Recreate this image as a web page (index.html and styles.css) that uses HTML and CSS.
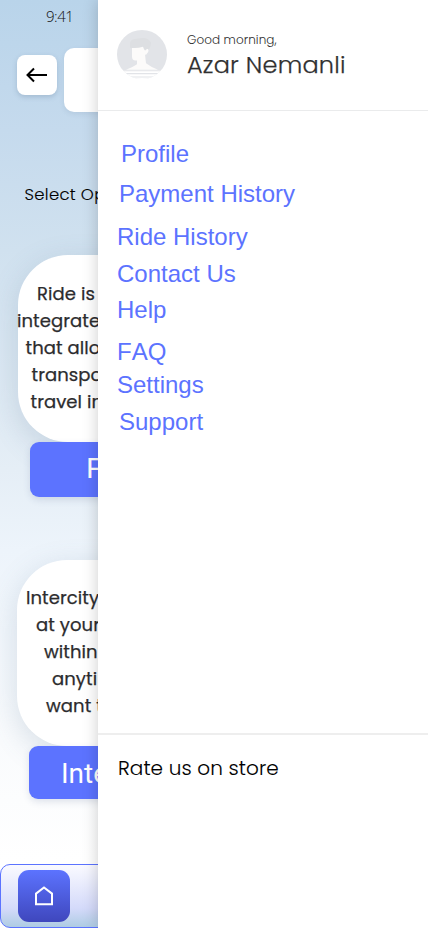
FILE: index.html
```html
<!DOCTYPE html>
<html lang="en">
<head>
<meta charset="utf-8">
<title>Menu</title>
<link rel="stylesheet" href="styles.css">
</head>
<body>
<div class="screen">
  <main class="page">
    <div class="time">9:41</div>
    <div class="topbar">
      <div class="back"><svg width="22" height="16" viewBox="0 0 22 16" fill="none" stroke="#000" stroke-width="2"><path d="M21 8H2M8 1.5L1.5 8L8 14.5"/></svg></div>
      <div class="panel"></div>
    </div>
    <h2 class="heading">Select Op</h2>
    <section class="card">
      <p class="l1">Ride is</p>
      <p class="l2">integrate</p>
      <p class="l3">that allo</p>
      <p class="l4">transpo</p>
      <p class="l5">travel in</p>
    </section>
    <div class="button ride">F</div>
    <section class="card second">
      <p class="m1">Intercity</p>
      <p class="m2">at your</p>
      <p class="m3">within</p>
      <p class="m4">anyti</p>
      <p class="m5">want t</p>
    </section>
    <div class="button inter">Inte</div>
    <nav class="tabs">
      <div class="home"><svg width="20" height="20" viewBox="0 0 20 20" fill="none" stroke="#fff" stroke-width="2"><path d="M2 7.6L10 1.4L18 7.6V18.2H2Z"/></svg></div>
    </nav>
  </main>
  <aside class="drawer">
    <header class="user">
      <svg class="avatar" width="50" height="49" viewBox="0 0 50 50" preserveAspectRatio="none">
        <defs><clipPath id="disc"><circle cx="25" cy="25" r="25"/></clipPath></defs>
        <g clip-path="url(#disc)">
          <rect width="50" height="50" fill="#e2e4e8"/>
          <path d="M15 17Q18 15 27 15L28 21C31 17 33 21 30 24Q29 26 28 25L29 34Q34 38 41 40.5H9Q16 38 20 35V31Q15 32 15 27Z" fill="#fcfbfa"/>
          <path d="M13 18V13Q14 9 20 9Q31 6 34 13Q34 17 32 20Q30 18 28 21Q27 20 26 17Q20 19 13 18Z" fill="#dddfe2"/>
          <path d="M0 41H50V50H0Z" fill="#fff"/>
          <path d="M0 41.5H50M0 44.5H50M0 48H50" stroke="#e2e4e8" stroke-width="1.1"/>
        </g>
      </svg>
      <div>
        <div class="greet">Good morning,</div>
        <div class="name">Azar Nemanli</div>
      </div>
    </header>
    <nav class="menu">
      <a class="profile">Profile</a>
      <a class="payment">Payment History</a>
      <a class="rides">Ride History</a>
      <a class="contact">Contact Us</a>
      <a class="help">Help</a>
      <a class="faq">FAQ</a>
      <a class="settings">Settings</a>
      <a class="support">Support</a>
    </nav>
    <footer class="rate">Rate us on store</footer>
  </aside>
</div>
</body>
</html>
```
FILE: styles.css
```css
* { box-sizing: border-box; }
body, p, h2 { margin: 0; }
body { width: 428px; height: 928px; overflow: hidden; font-family: Poppins, Inter, sans-serif; font-feature-settings: "cv11"; }
.screen { display: flex; width: 428px; height: 928px; }
.page {
  display: flex; flex-direction: column;
  width: 98px; height: 928px; overflow: hidden; white-space: nowrap;
  background: linear-gradient(#b9d4ea 0, #c5daed 130px, #d0e1ef 250px, #e5eef6 470px, #edf4fb 550px, #f9fbfd 740px, #fff 860px);
}
.page > * { flex-shrink: 0; }
.time { height: 48px; padding: 7px 0 0 46px; font: 350 15px/18px "Open Sans", sans-serif; letter-spacing: -.5px; color: #111; }
.topbar { display: flex; gap: 7px; height: 64px; padding-left: 17px; }
.back { display: flex; align-items: center; justify-content: center; flex: none; width: 40px; height: 40px; margin-top: 7px; border-radius: 8px; background: #fff; box-shadow: 0 2px 5px rgba(70,100,130,.25); }
.panel { flex: none; width: 200px; height: 64px; border-radius: 10px; background: #fff; box-shadow: 0 2px 5px rgba(70,100,130,.12); }
.heading { height: 143px; padding: 69px 0 0 24.5px; font-size: 16.5px; line-height: 27px; font-weight: 300; letter-spacing: .3px; color: #000; -webkit-text-stroke: .12px #000; }
.card { width: 380px; height: 187px; margin-left: 18px; padding-top: 25px; border-radius: 50px; background: #fff; box-shadow: 0 8px 30px rgba(80,110,140,.2); font-size: 18px; font-weight: 400; line-height: 27px; letter-spacing: .08px; color: #2c2c2e; -webkit-text-stroke: .25px #2c2c2e; }
.second { height: 186px; margin: 63px 0 0 17px; padding-top: 24px; }
.l1 { padding-left: 19px; } .l2 { margin-left: -1px; } .l3 { padding-left: 7.5px; } .l4 { padding-left: 13.5px; } .l5 { padding-left: 12.5px; }
.m1 { padding-left: 9px; } .m2 { padding-left: 19px; } .m3 { padding-left: 27px; } .m4 { padding-left: 35px; } .m5 { padding-left: 29px; }
.button { width: 340px; border-radius: 9px; background: #5c73ff; color: #fff; box-shadow: 0 3px 7px rgba(60,80,130,.15); }
.ride { height: 55px; margin-left: 30px; padding-left: 56px; font: 30px/52px "Liberation Sans", sans-serif; }
.inter { height: 53px; margin-left: 29px; padding-left: 32px; font: 28px/55px Roboto, sans-serif; }
.tabs { width: 428px; height: 64px; margin-top: 65px; padding: 5px 0 0 17px; border: 1px solid #5c73ff; border-radius: 10px; background: linear-gradient(#fafaff, #d4dafa 70%, #aecce3); }
.home { display: flex; align-items: center; justify-content: center; width: 52px; height: 52px; border-radius: 11px; background: linear-gradient(#5c73ff, #3f47bd); }
.drawer { position: relative; width: 330px; height: 928px; background: #fff; box-shadow: 0 0 15px rgba(0,0,0,.2); }
.user { display: flex; gap: 20px; height: 111px; padding: 29px 0 0 19px; border-bottom: 1px solid #eaebec; white-space: nowrap; color: #303030; }
.avatar { margin-top: 1px; }
.greet { padding-top: 2px; font-size: 12px; line-height: 18px; font-weight: 300; letter-spacing: .08px; }
.name { font-size: 24px; line-height: 32px; font-weight: 300; letter-spacing: .22px; -webkit-text-stroke: .25px #303030; }
.menu { display: flex; flex-direction: column; height: 622px; padding: 29px 0 0 19px; font: 24px/28px "Liberation Sans", Arial, sans-serif; color: #5c73ff; }
.profile { padding-left: 4px; } .payment { margin-top: 12px; padding-left: 2px; } .rides { margin-top: 15px; }
.contact { margin-top: 9px; } .help { margin-top: 8px; } .faq { margin-top: 14px; font-kerning: none; } .settings { margin-top: 5px; } .support { margin-top: 9px; padding-left: 2px; }
.rate { border-top: 2px solid #eee; padding: 18px 0 0 20px; font-size: 20px; line-height: 30px; font-weight: 300; letter-spacing: .08px; color: #000; -webkit-text-stroke: .1px #000; }
```
